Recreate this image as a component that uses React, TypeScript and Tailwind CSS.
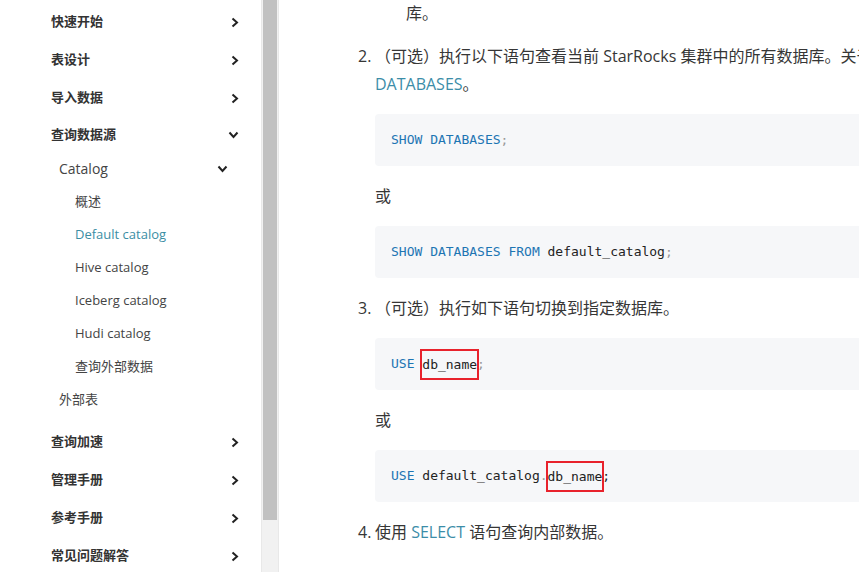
import React from "react";

const cjk = { fontFamily: '"Open Sans", "Noto Sans CJK SC", sans-serif' };
const mono = { fontFamily: '"DejaVu Sans Mono", "Liberation Mono", monospace' };

function ChevronRight() {
  return (
    <svg width="8" height="11" viewBox="0 0 8 11" className="shrink-0">
      <polyline points="1.5,1.5 6,5.5 1.5,9.5" fill="none" stroke="#222" strokeWidth="2" />
    </svg>
  );
}
function ChevronDown() {
  return (
    <svg width="11" height="8" viewBox="0 0 11 8" className="shrink-0">
      <polyline points="1.5,1.5 5.5,6 9.5,1.5" fill="none" stroke="#222" strokeWidth="2" />
    </svg>
  );
}

function Top({ label, open, h = "h-[38px]" }: { label: string; open?: boolean; h?: string }) {
  return (
    <div className={`${h} flex items-center justify-between pl-[51px] pr-[22px] text-[13px] font-semibold text-[#333]`}>
      <span>{label}</span>
      {open ? <ChevronDown /> : <ChevronRight />}
    </div>
  );
}

function Sub({ label, active }: { label: string; active?: boolean }) {
  return (
    <div className={`h-[33px] flex items-center pl-[75px] text-[13px] ${active ? "text-[#3b8ea4]" : "text-[#444]"}`}>
      {label}
    </div>
  );
}

function Code({ children }: { children: React.ReactNode }) {
  return (
    <div className="h-[52px] w-[600px] rounded-[4px] bg-[#f6f7f9] flex items-center pl-[16px] text-[13px] text-[#222]" style={mono}>
      <span className="whitespace-pre leading-[20px]">{children}</span>
    </div>
  );
}

const K = ({ children }: { children: React.ReactNode }) => <span className="text-[#1d75b3]">{children}</span>;
const P = ({ children }: { children: React.ReactNode }) => <span className="text-[#999]">{children}</span>;
const Box = ({ children }: { children: React.ReactNode }) => (
  <span className="inline-block h-[27px] leading-[27px] outline-2 outline-[#e8222c] align-middle -my-[6px]">{children}</span>
);

export default function App() {
  return (
    <div className="flex h-[572px] w-[859px] overflow-hidden bg-white" style={cjk}>
      <div className="w-[261px] shrink-0 pt-[3px]">
        <Top label="快速开始" />
        <Top label="表设计" />
        <Top label="导入数据" />
        <Top label="查询数据源" open h="h-[35px]" />
        <div className="h-[33px] flex items-center justify-between pl-[59px] pr-[33px] text-[14px] text-[#444]">
          <span>Catalog</span>
          <ChevronDown />
        </div>
        <Sub label="概述" />
        <Sub label="Default catalog" active />
        <Sub label="Hive catalog" />
        <Sub label="Iceberg catalog" />
        <Sub label="Hudi catalog" />
        <Sub label="查询外部数据" />
        <div className="h-[33px] flex items-center pl-[59px] text-[13px] text-[#444]">外部表</div>
        <div className="mt-[7px]">
          <Top label="查询加速" />
          <Top label="管理手册" />
          <Top label="参考手册" />
          <Top label="常见问题解答" />
        </div>
      </div>
      <div className="w-[18px] shrink-0 bg-[#f1f1f1] border-x border-[#e8e8e8]">
        <div className="h-[520px] mx-[1px] bg-[#c1c1c1]" />
      </div>
      <div className="flex-1 overflow-hidden">
        <div className="w-[700px] pl-[96px] -mt-[1px] text-[16px] leading-[28px] text-[#363636]">
          <div className="pl-[31px] whitespace-nowrap">库。</div>
          <div className="relative mt-[15px]">
            <span className="absolute -left-[17px] top-0">2.</span>
            <div className="whitespace-nowrap">（可选）执行以下语句查看当前 StarRocks 集群中的所有数据库。关于 SHOW</div>
            <div><span className="text-[#3c8da8]">DATABASES</span>。</div>
          </div>
          <div className="mt-[16px]">
            <Code><K>SHOW DATABASES</K><P>;</P></Code>
          </div>
          <div className="mt-[16px]">或</div>
          <div className="mt-[16px]">
            <Code><K>SHOW DATABASES FROM</K> default_catalog<P>;</P></Code>
          </div>
          <div className="relative mt-[16px]">
            <span className="absolute -left-[17px] top-0">3.</span>
            <div className="whitespace-nowrap">（可选）执行如下语句切换到指定数据库。</div>
          </div>
          <div className="mt-[16px]">
            <Code><K>USE</K> <Box>db_name</Box><P>;</P></Code>
          </div>
          <div className="mt-[16px]">或</div>
          <div className="mt-[16px]">
            <Code><K>USE</K> default_catalog<P>.</P><Box>db_name</Box>;</Code>
          </div>
          <div className="relative mt-[16px]">
            <span className="absolute -left-[17px] top-0">4.</span>
            <div className="whitespace-nowrap">使用 <span className="text-[#3c8da8]">SELECT</span> 语句查询内部数据。</div>
          </div>
        </div>
      </div>
    </div>
  );
}
